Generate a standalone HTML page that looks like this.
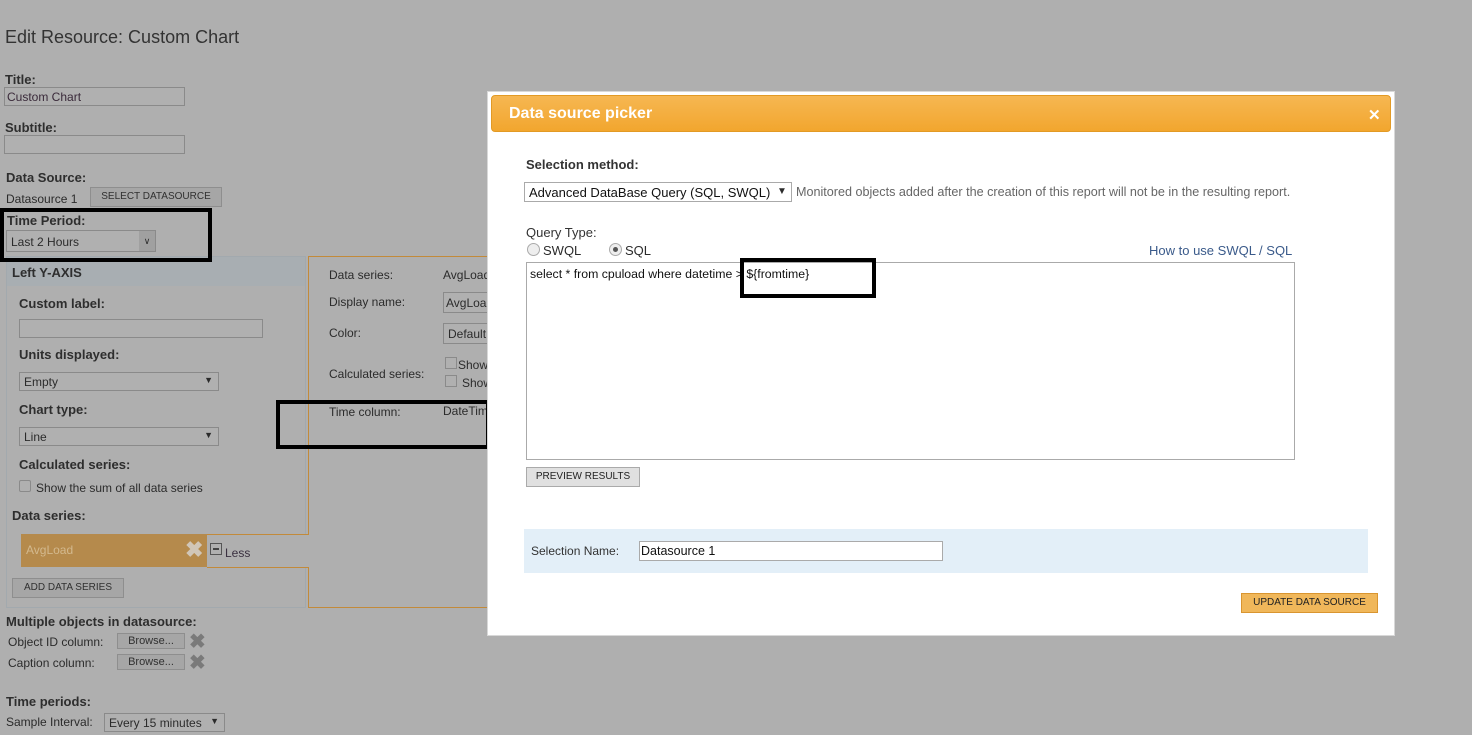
<!DOCTYPE html><html><head><style>
body{margin:0;width:1472px;height:735px;background:#afafaf;font-family:"Liberation Sans",sans-serif;position:relative;overflow:hidden;color:#2b2b2b}
.a{position:absolute;white-space:nowrap}
.b{font-weight:bold;font-size:13px;color:#2e2e2e}
.t{font-size:12px}
.inp{position:absolute;border:1px solid #8a8a8a;background:#b0b0b0;box-sizing:border-box}
.btn{position:absolute;border:1px solid #8e8e8e;background:#a6a6a6;font-size:10px;text-align:center;box-sizing:border-box;color:#303030}
.box{position:absolute;border:2px solid #000;box-sizing:border-box;z-index:5}
.x{position:absolute;color:#7a7a7a;font-size:20px;font-weight:bold;line-height:1}
</style></head><body>
<div class="a" style="left:5px;top:27px;font-size:18px;color:#333">Edit Resource: Custom Chart</div>
<div class="a b" style="left:5px;top:72px">Title:</div>
<div class="inp" style="left:4px;top:87px;width:181px;height:19px"><span class="a t" style="left:2px;top:2px;color:#3a2a3a">Custom Chart</span></div>
<div class="a b" style="left:5px;top:120px">Subtitle:</div>
<div class="inp" style="left:4px;top:135px;width:181px;height:19px"></div>
<div class="a b" style="left:6px;top:170px">Data Source:</div>
<div class="a t" style="left:6px;top:192px">Datasource 1</div>
<div class="btn" style="left:90px;top:187px;width:132px;height:20px;line-height:18px">SELECT DATASOURCE</div>
<div class="box" style="left:0;top:208px;width:212px;height:54px;border-width:4px"></div>
<div class="a b" style="left:7px;top:213px">Time Period:</div>
<div class="inp" style="left:6px;top:230px;width:150px;height:22px"><span class="a t" style="left:4px;top:4px">Last 2 Hours</span><span class="a" style="right:0;top:0;width:16px;height:20px;background:#a0a0a0;font-size:9px;text-align:center;line-height:20px">&#8744;</span></div>
<div style="position:absolute;left:6px;top:256px;width:300px;height:352px;border:1px solid #a2a9ae;box-sizing:border-box"></div>
<div style="position:absolute;left:7px;top:257px;width:298px;height:29px;background:#a8aeb2"></div>
<div class="a b" style="left:12px;top:265px">Left Y-AXIS</div>
<div class="a b" style="left:19px;top:296px">Custom label:</div>
<div class="inp" style="left:19px;top:319px;width:244px;height:19px"></div>
<div class="a b" style="left:19px;top:347px">Units displayed:</div>
<div class="inp" style="left:19px;top:372px;width:200px;height:19px"><span class="a t" style="left:4px;top:2px">Empty</span><span class="a" style="right:5px;top:2px;font-size:9px">▼</span></div>
<div class="a b" style="left:19px;top:402px">Chart type:</div>
<div class="inp" style="left:19px;top:427px;width:200px;height:19px"><span class="a t" style="left:4px;top:2px">Line</span><span class="a" style="right:5px;top:2px;font-size:9px">▼</span></div>
<div class="a b" style="left:19px;top:457px">Calculated series:</div>
<div class="inp" style="left:19px;top:480px;width:12px;height:12px;border-radius:2px"></div>
<div class="a t" style="left:36px;top:481px">Show the sum of all data series</div>
<div class="a b" style="left:12px;top:508px">Data series:</div>
<div style="position:absolute;left:308px;top:256px;width:190px;height:352px;border:1px solid #c28a3a;box-sizing:border-box;border-right:none"></div>
<div style="position:absolute;left:207px;top:534px;width:102px;height:32px;border-top:1px solid #c28a3a;border-bottom:1px solid #c28a3a;background:#afafaf"></div>
<div style="position:absolute;left:308px;top:535px;width:2px;height:30px;background:#afafaf"></div>
<div style="position:absolute;left:21px;top:534px;width:186px;height:33px;background:#b58a4c"></div>
<div class="a t" style="left:26px;top:543px;color:#d3b98e">AvgLoad</div>
<div class="x" style="left:185px;top:539px;color:#d0c6b8;font-size:22px">✖</div>
<div class="inp" style="left:210px;top:543px;width:12px;height:12px;border-color:#555"><div style="position:absolute;left:2px;top:4px;width:6px;height:2px;background:#444"></div></div>
<div class="a t" style="left:225px;top:546px;color:#3a3040">Less</div>
<div class="btn" style="left:12px;top:578px;width:112px;height:20px;line-height:18px">ADD DATA SERIES</div>
<div class="a t" style="left:329px;top:268px">Data series:</div><div class="a t" style="left:443px;top:268px">AvgLoad</div>
<div class="a t" style="left:329px;top:295px">Display name:</div>
<div class="inp" style="left:443px;top:292px;width:60px;height:21px"><span class="a t" style="left:2px;top:3px">AvgLoad</span></div>
<div class="a t" style="left:329px;top:326px">Color:</div>
<div class="inp" style="left:443px;top:323px;width:60px;height:21px"><span class="a t" style="left:4px;top:3px">Default</span></div>
<div class="a t" style="left:329px;top:367px">Calculated series:</div>
<div class="inp" style="left:445px;top:357px;width:12px;height:12px"></div><div class="a t" style="left:458px;top:358px">Show</div>
<div class="inp" style="left:445px;top:375px;width:12px;height:12px"></div><div class="a t" style="left:462px;top:376px">Show</div>
<div class="a t" style="left:329px;top:405px">Time column:</div><div class="a t" style="left:443px;top:404px">DateTime</div>
<div class="box" style="left:276px;top:400px;width:214px;height:49px;border-width:4px"></div>
<div class="a b" style="left:6px;top:614px">Multiple objects in datasource:</div>
<div class="a t" style="left:8px;top:635px">Object ID column:</div>
<div class="btn" style="left:117px;top:633px;width:68px;height:16px;line-height:14px;font-size:11px">Browse...</div><div class="x" style="left:189px;top:632px">✖</div>
<div class="a t" style="left:8px;top:656px">Caption column:</div>
<div class="btn" style="left:117px;top:654px;width:68px;height:16px;line-height:14px;font-size:11px">Browse...</div><div class="x" style="left:189px;top:653px">✖</div>
<div class="a b" style="left:6px;top:694px">Time periods:</div>
<div class="a t" style="left:6px;top:715px">Sample Interval:</div>
<div class="inp" style="left:104px;top:713px;width:121px;height:19px"><span class="a t" style="left:4px;top:2px">Every 15 minutes</span><span class="a" style="right:5px;top:2px;font-size:9px">▼</span></div>

<div style="position:absolute;left:487px;top:91px;width:908px;height:545px;background:#fff;border:1px solid #d8d8d8;box-sizing:border-box;z-index:6"></div>
<div style="z-index:7;position:absolute;left:0;top:0;width:1472px;height:735px">
<div style="position:absolute;left:491px;top:95px;width:900px;height:37px;border-radius:4px;background:linear-gradient(#f6b752,#f2a62e);border:1px solid #e29a25;box-sizing:border-box"></div>
<div class="a" style="left:509px;top:105px;font-size:16px;font-weight:bold;color:#fff">Data source picker</div>
<div class="a" style="left:1368px;top:106px;font-size:15px;font-weight:bold;color:#fff">✕</div>
<div class="a b" style="left:526px;top:157px;color:#333">Selection method:</div>
<div style="position:absolute;left:524px;top:182px;width:268px;height:20px;border:1px solid #aaa;box-sizing:border-box"></div>
<div class="a" style="left:529px;top:185px;font-size:13px;color:#111">Advanced DataBase Query (SQL, SWQL)</div>
<div class="a" style="left:777px;top:186px;font-size:10px">▼</div>
<div class="a" style="left:796px;top:185px;font-size:12.6px;color:#666">Monitored objects added after the creation of this report will not be in the resulting report.</div>
<div class="a" style="left:526px;top:225px;font-size:13px;color:#333">Query Type:</div>
<div style="position:absolute;left:527px;top:243px;width:11px;height:11px;border:1px solid #aaa;border-radius:50%;background:#eee"></div>
<div class="a" style="left:543px;top:243px;font-size:13px">SWQL</div>
<div style="position:absolute;left:609px;top:243px;width:11px;height:11px;border:1px solid #aaa;border-radius:50%;background:#eee"><div style="position:absolute;left:3px;top:3px;width:5px;height:5px;border-radius:50%;background:#555"></div></div>
<div class="a" style="left:625px;top:243px;font-size:13px">SQL</div>
<div class="a" style="left:1149px;top:243px;font-size:13px;color:#3a5a8a">How to use SWQL / SQL</div>
<div style="position:absolute;left:526px;top:262px;width:769px;height:198px;border:1px solid #aaa;box-sizing:border-box"></div>
<div class="a" style="left:530px;top:267px;font-size:12.3px;color:#111">select * from cpuload where datetime &gt; ${fromtime}</div>
<div class="box" style="left:740px;top:258px;width:136px;height:40px;border-width:4px"></div>
<div class="btn" style="left:526px;top:467px;width:114px;height:20px;line-height:18px;background:#e0e0e0;border-color:#aaa;color:#222">PREVIEW RESULTS</div>
<div style="position:absolute;left:524px;top:529px;width:844px;height:44px;background:#e3eff8"></div>
<div class="a t" style="left:531px;top:544px;color:#333">Selection Name:</div>
<div style="position:absolute;left:639px;top:541px;width:304px;height:20px;border:1px solid #aaa;background:#fff;box-sizing:border-box"></div>
<div class="a" style="left:641px;top:544px;font-size:12.5px;color:#111">Datasource 1</div>
<div class="btn" style="left:1241px;top:593px;width:137px;height:20px;line-height:18px;background:#f0b75a;border-color:#d99530;color:#222">UPDATE DATA SOURCE</div>
</div>
</body></html>
